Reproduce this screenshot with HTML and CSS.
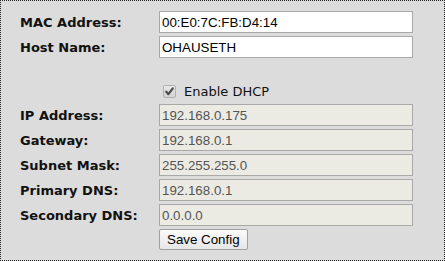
FILE: index.html
```html
<!DOCTYPE html>
<html>
<head>
<meta charset="utf-8">
<link rel="stylesheet" href="styles.css">
</head>
<body>
<div class="panel">
  <form class="grid">
    <label class="lbl">MAC Address:</label>
    <div class="field">00:E0:7C:FB:D4:14</div>
    <label class="lbl">Host Name:</label>
    <div class="field">OHAUSETH</div>
    <div class="spacer"></div>
    <div class="dhcp">
      <span class="check"><svg width="13" height="13" viewBox="0 0 13 13"><path d="M3.2 6.6 L5.4 9.2 L9.8 3.4" fill="none" stroke="#4a4a4a" stroke-width="2.2" stroke-linecap="round" stroke-linejoin="round"/></svg></span>
      <span class="dhcp-text">Enable DHCP</span>
    </div>
    <label class="lbl">IP Address:</label>
    <div class="field disabled">192.168.0.175</div>
    <label class="lbl">Gateway:</label>
    <div class="field disabled">192.168.0.1</div>
    <label class="lbl">Subnet Mask:</label>
    <div class="field disabled">255.255.255.0</div>
    <label class="lbl">Primary DNS:</label>
    <div class="field disabled">192.168.0.1</div>
    <label class="lbl">Secondary DNS:</label>
    <div class="field disabled">0.0.0.0</div>
    <div class="spacer"></div>
    <div><span class="btn">Save Config</span></div>
  </form>
</div>
</body>
</html>
```
FILE: styles.css
```css
html, body {
  margin: 0;
  padding: 0;
}
body {
  width: 445px;
  height: 261px;
  background: #dcdcdc;
}
.panel {
  box-sizing: border-box;
  width: 445px;
  height: 261px;
  border: 1px dotted #222;
  background: #dcdcdc;
  padding: 10px 0 0 19px;
}
.grid {
  display: grid;
  grid-template-columns: 139px 254px;
  row-gap: 3px;
  margin: 0;
}
.lbl {
  font-family: "DejaVu Sans", Verdana, sans-serif;
  font-weight: bold;
  font-size: 13px;
  color: #111;
  display: flex;
  align-items: center;
  height: 22px;
}
.field {
  box-sizing: border-box;
  height: 22px;
  border: 1px solid #a9a9a9;
  background: #fff;
  font-family: "Liberation Sans", Arial, sans-serif;
  font-size: 13.33px;
  color: #000;
  padding: 0 2px;
  display: flex;
  align-items: center;
}
.field.disabled {
  background: #ebebe4;
  color: #545454;
}
.dhcp {
  height: 40px;
  display: flex;
  align-items: flex-start;
  padding-top: 24px;
  box-sizing: border-box;
  padding-left: 4px;
}
.check {
  box-sizing: border-box;
  width: 13px;
  height: 13px;
  border: 1px solid #b0b0b0;
  border-radius: 2px;
  background: linear-gradient(#e8e8e8, #d4d4d4);
  display: block;
  position: relative;
}
.check svg {
  position: absolute;
  left: -1px;
  top: -1px;
}
.dhcp-text {
  font-family: "DejaVu Sans", Verdana, sans-serif;
  font-size: 13px;
  color: #111;
  margin-left: 8px;
  line-height: 13px;
}
.btn {
  box-sizing: border-box;
  display: inline-flex;
  align-items: center;
  height: 21px;
  padding: 0 7px;
  border: 1px solid #a0a0a0;
  border-radius: 2px;
  background: linear-gradient(#fbfbfb, #e6e6e6);
  font-family: "Liberation Sans", Arial, sans-serif;
  font-size: 13.33px;
  color: #000;
}
```
